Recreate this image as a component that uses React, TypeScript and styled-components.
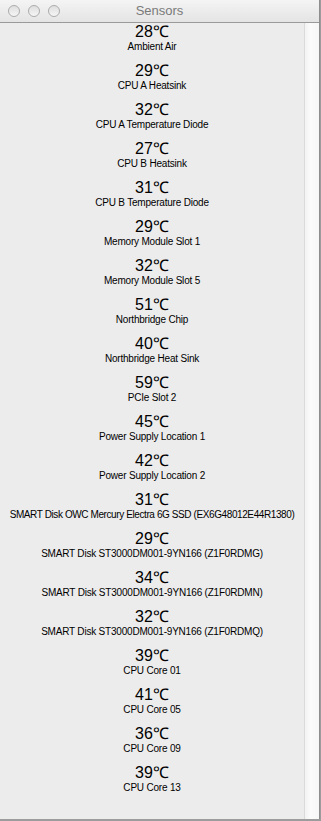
import React from "react";
import styled, { createGlobalStyle } from "styled-components";

const GlobalStyle = createGlobalStyle`
  html, body {
    margin: 0;
    padding: 0;
    background: #9c9c9c;
  }
`;

const Window = styled.div`
  width: 319px;
  height: 819px;
  display: flex;
  flex-direction: column;
  background: #ececec;
  border-right: 1px solid #8e8e8e;
  overflow: hidden;
  font-family: "Liberation Sans", Arial, sans-serif;
`;

const TitleBar = styled.div`
  position: relative;
  height: 22px;
  flex: none;
  display: flex;
  align-items: center;
  padding-left: 8px;
  gap: 8px;
  background: linear-gradient(#f4f4f4, #e4e4e4);
  border-bottom: 1px solid #9a9a9a;
`;

const Light = styled.span`
  width: 10px;
  height: 10px;
  border-radius: 50%;
  border: 1px solid #acacac;
  background: linear-gradient(#dedede, #f6f6f6);
`;

const Title = styled.div`
  position: absolute;
  left: 0;
  right: 0;
  top: 0;
  line-height: 22px;
  text-align: center;
  font-size: 13px;
  color: #7a7a7a;
  pointer-events: none;
`;

const Body = styled.div`
  flex: 1;
  display: flex;
  min-height: 0;
`;

const List = styled.div`
  flex: 1;
  display: flex;
  flex-direction: column;
`;

const Scrollbar = styled.div`
  width: 14px;
  flex: none;
  border-left: 1px solid #dadada;
  background: linear-gradient(90deg, #f2f2f2, #fbfbfb 40%, #f7f7f7);
`;

const Entry = styled.div`
  height: 39px;
  display: flex;
  flex-direction: column;
  align-items: center;
  color: #000;
`;

const Temp = styled.div`
  font-size: 16px;
  line-height: 18px;
`;

const Label = styled.div<{ $tight?: boolean }>`
  font-size: 10px;
  line-height: 12px;
  white-space: nowrap;
  letter-spacing: ${(p) => (p.$tight ? "-0.4px" : "-0.2px")};
`;

const sensors: [number, string][] = [
  [28, "Ambient Air"],
  [29, "CPU A Heatsink"],
  [32, "CPU A Temperature Diode"],
  [27, "CPU B Heatsink"],
  [31, "CPU B Temperature Diode"],
  [29, "Memory Module Slot 1"],
  [32, "Memory Module Slot 5"],
  [51, "Northbridge Chip"],
  [40, "Northbridge Heat Sink"],
  [59, "PCIe Slot 2"],
  [45, "Power Supply Location 1"],
  [42, "Power Supply Location 2"],
  [31, "SMART Disk OWC Mercury Electra 6G SSD (EX6G48012E44R1380)"],
  [29, "SMART Disk ST3000DM001-9YN166 (Z1F0RDMG)"],
  [34, "SMART Disk ST3000DM001-9YN166 (Z1F0RDMN)"],
  [32, "SMART Disk ST3000DM001-9YN166 (Z1F0RDMQ)"],
  [39, "CPU Core 01"],
  [41, "CPU Core 05"],
  [36, "CPU Core 09"],
  [39, "CPU Core 13"],
];

export default function App() {
  return (
    <>
      <GlobalStyle />
      <Window>
        <TitleBar>
          <Light />
          <Light />
          <Light />
          <Title>Sensors</Title>
        </TitleBar>
        <Body>
          <List>
            {sensors.map(([temp, name], i) => (
              <Entry key={i}>
                <Temp>{temp}℃</Temp>
                <Label $tight={name.length > 45}>{name}</Label>
              </Entry>
            ))}
          </List>
          <Scrollbar />
        </Body>
      </Window>
    </>
  );
}
